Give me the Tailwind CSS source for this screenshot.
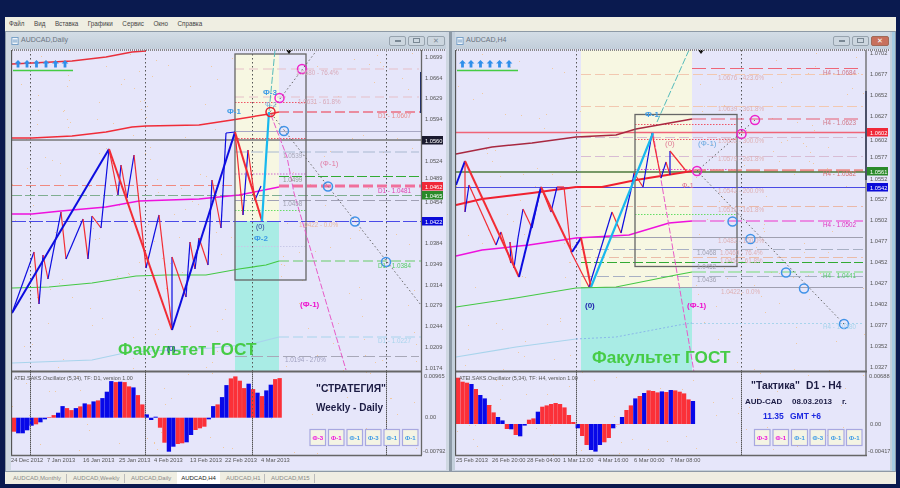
<!DOCTYPE html>
<html lang="ru">
<head>
    <meta charset="UTF-8">
    <title>AUDCAD</title>
    <script src="https://cdn.jsdelivr.net/npm/@tailwindcss/browser@4"></script>
</head>
<body class="h-[488px] w-[900px] overflow-hidden bg-[#0a1a4f] pl-[5px] pr-[4px] pt-[17px] font-['Liberation_Sans',sans-serif]">
    <div class="flex h-[467px] flex-col">
        <!-- menu -->
        <div class="flex h-[14px] items-center gap-[9.500px] bg-[#efeee2] pl-[4px] text-[6.300px] text-[#444]">
            <span>Файл</span><span>Вид</span><span>Вставка</span><span>Графики</span><span>Сервис</span><span>Окно</span><span>Справка</span>
        </div>

        <div class="flex h-[441px] gap-[2px] bg-[#8d9aa6] p-[1px]">
            <!-- daily window -->
            <div class="flex w-[444px] flex-col border-r border-[#8b98a4] bg-[#cfd8e2] pl-[5px] pr-[3px]">
                <div class="flex h-[17px] items-center justify-between bg-gradient-to-b from-[#d3dde6] to-[#c2ceda] pr-[1px]">
                    <div class="flex items-center gap-[2px] text-[7px] text-[#6a7480]">
                        <svg class="h-[10px] w-[8px]" viewBox="0 0 9 10"><rect x="1" y="1" width="7" height="8" fill="#eef4fa" stroke="#6f9ac4"/><path d="M2 4H7M2 6H7" stroke="#6f9ac4"/></svg>
                        <span>AUDCAD,Daily</span>
                    </div>
                    <div class="flex gap-[2px]">
                        <div class="flex h-[10px] w-[17px] items-center justify-center rounded-[2px] border border-[#97a3ae] bg-[#ccd6df]"><span class="h-[2px] w-[6px] border border-[#7a8894]"></span></div>
                        <div class="flex h-[10px] w-[17px] items-center justify-center rounded-[2px] border border-[#97a3ae] bg-[#ccd6df]"><span class="h-[5px] w-[7px] border border-[#7a8894]"></span></div>
                        <div class="flex h-[10px] w-[18px] items-center justify-center rounded-[2px] border border-[#97a3ae] bg-[#ccd6df] text-[7px] leading-none text-[#7a8894]">✕</div>
                    </div>
                </div>
                <svg id="daily" class="block h-[421px] w-[435px] blur-[0.3px]" viewBox="12 49 435 421" fill="none">
                    <defs><path id="up" d="M0 -4L3.4 -0.6H1.4V3.5H-1.4V-0.6H-3.4Z" fill="#2f8fea"/></defs>
                    <rect x="12" y="49" width="435" height="421" fill="#e6e6fa"/>
                    <g id="daily-specks"></g>
                    <rect x="236" y="54" width="44" height="167" fill="#f7f7e2"/>
                    <rect x="236" y="221" width="44" height="150" fill="#a9ece5"/>
                    <path d="M31.500 50V455M146.500 50V455M253.500 50V455M387.500 50V455" stroke="#555" stroke-dasharray="1.500 2.500"/>

                    <!-- levels -->
                    <g stroke-width="1">
                        <path d="M236 69H420M236 97H420" stroke="#e6bfc8" stroke-dasharray="9 5"/>
                        <path d="M236 102.500H307M236 138.500H307" stroke="#ee5566" stroke-dasharray="1.500 1.500"/>
                        <path d="M237 131.500H422" stroke="#a8a8c4"/>
                        <path d="M236 152H420" stroke="#a8b8d0" stroke-dasharray="12 4"/>
                        <path d="M236 174H307" stroke="#cc66cc" stroke-dasharray="1.500 1.500"/>
                        <path d="M280 176.500H420" stroke="#33aa33" stroke-dasharray="10 3"/>
                        <path d="M13 185.500H236" stroke="#f08a80" stroke-dasharray="10 4"/>
                        <path d="M13 195.500H422" stroke="#7fae90" stroke-dasharray="10 3"/>
                        <path d="M236 200.500H420" stroke="#a0a0b4" stroke-dasharray="12 4"/>
                        <path d="M236 210.500H307" stroke="#66dd66" stroke-dasharray="1.500 1.500"/>
                        <path d="M13 221.500H422" stroke="#4a4ae8" stroke-dasharray="14 3"/>
                        <path d="M236 246.500H307" stroke="#c8c8e8" stroke-dasharray="1.500 1.500"/>
                        <path d="M236 356.500H420" stroke="#a8a8b8" stroke-dasharray="12 4"/>
                    </g>
                    <path d="M280 112H422" stroke="#ee3344" stroke-dasharray="10 4"/>
                    <path d="M280 186H422" stroke="#f0709c" stroke-width="3" stroke-dasharray="10 4"/>
                    <path d="M280 261H422" stroke="#66cc66" stroke-dasharray="10 4"/>
                    <path d="M280 337H422" stroke="#a8d4ec" stroke-dasharray="10 4"/>

                    <path d="M13 140H422" stroke="#777" stroke-width="1.500"/>

                    <!-- moving averages -->
                    <path d="M13 64L73 61L107 57L133 52L147 51" stroke="#e8303c" stroke-width="1.500"/>
                    <path d="M13 138L33 138L73 136L107 132L133 127L147 126L200 125L233 120L270 114L280 112" stroke="#f02c38" stroke-width="1.500"/>
                    <path d="M13 214L33 214L62 211L107 207L140 201L200 199L240 195L280 187" stroke="#ee11dd" stroke-width="1.500"/>
                    <path d="M13 288L50 287L93 283L137 276L167 275L207 275L240 269L267 265L280 261" stroke="#44c844" stroke-width="1.200"/>
                    <path d="M13 363L93 360L130 352L213 348L253 344L280 337" stroke="#a8d4ec" stroke-width="1.200"/>

                    <rect x="236" y="54" width="71" height="226" stroke="#666" stroke-width="1.300"/>

                    <!-- trend lines -->
                    <path d="M276 50L270 112" stroke="#55bbbb" stroke-dasharray="7 2"/>
                    <path d="M272 115L288 157L295 193L347 370" stroke="#e85bc8" stroke-dasharray="6 2"/>
                    <path d="M318 50L271 112L356 221L422 305" stroke="#666" stroke-dasharray="1.500 2.500"/>

                    <g id="daily-thin"></g>
                    <g id="daily-thick"></g>
                    <path d="M263 221L270 112" stroke="#18b8ee" stroke-width="2.200"/>

                    <!-- fibo marks -->
                    <g stroke-width="1.500">
                        <circle cx="303" cy="69" r="4.500" stroke="#ee22cc"/>
                        <circle cx="280.500" cy="98" r="4.500" stroke="#ee22cc"/>
                        <circle cx="271.500" cy="112" r="4.500" stroke="#e82030"/>
                        <circle cx="285" cy="131" r="4.500" stroke="#3f92e8"/>
                        <circle cx="329" cy="186.500" r="4.500" stroke="#3f92e8"/>
                        <circle cx="356" cy="221.500" r="4.500" stroke="#3f92e8"/>
                        <circle cx="387" cy="262" r="4.500" stroke="#3f92e8"/>
                    </g>

                    <use href="#up" x="19" y="64"/><use href="#up" x="28" y="64"/><use href="#up" x="37.500" y="64"/><use href="#up" x="47" y="64"/><use href="#up" x="56.500" y="64"/><use href="#up" x="66" y="64"/>
                    <path d="M14 70.500H74" stroke="#44cc44" stroke-width="1.500"/>
                    <path d="M287 50H293L290 54Z" fill="#111"/>
                    <path d="M422 72V113" stroke="#1a2a6a" stroke-width="2"/>

                    <!-- fibo labels -->
                    <g font-size="6.300">
                        <text x="297" y="75" fill="#d8a8b8">1.0680 - 76.4%</text>
                        <text x="299" y="104" fill="#d8a8b8">1.0631 - 61.8%</text>
                        <text x="379" y="118" fill="#e88a8a">D1 - 1.0607</text>
                        <text x="284" y="158" fill="#a8a8b8">1.0539</text>
                        <text x="284" y="182" fill="#8f9f8f">1.0499</text>
                        <text x="379" y="193" fill="#e040b0">D1 - 1.0481</text>
                        <text x="284" y="206" fill="#a0a0b0">1.0458</text>
                        <text x="300" y="227" fill="#e8b8a0">1.0422 - 0.0%</text>
                        <text x="379" y="268" fill="#55cc66">D1 - 1.0384</text>
                        <text x="379" y="343" fill="#a8d4ec">D1 - 1.0227</text>
                        <text x="286" y="362" fill="#a0a0c0">1.0194 - 270%</text>
                    </g>
                    <g font-size="8" font-weight="700" fill="#3b9ae6">
                        <text x="264" y="95">Ф-3</text>
                        <text x="228" y="114">Ф-1</text>
                        <text x="255" y="241">Ф-2</text>
                    </g>
                    <text x="266" y="107" font-size="7" fill="#7fb0e0">Ф-2</text>
                    <text x="321" y="166" font-size="8" fill="#e080a8">(Ф-1)</text>
                    <text x="301" y="307" font-size="8" font-weight="700" fill="#ee11cc">(Ф-1)</text>
                    <text x="257" y="229" font-size="7" fill="#2a3a9a">(0)</text>
                    <text x="119" y="355" font-size="17.200" font-weight="700" fill="#46cc46">Факультет ГОСТ</text>
                    <text x="168" y="351" font-size="7" fill="#1a1aaa">(0)</text>

                    <!-- oscillator -->
                    <path d="M12 371.500H423" stroke="#666" stroke-width="1.800"/>
                    <g id="daily-bars"></g>
                    <path d="M31.500 372V455M146.500 372V455M253.500 372V455M387.500 372V455" stroke="#555" stroke-dasharray="1.500 2.500"/>
                    <path d="M12.500 50V455" stroke="#555" stroke-width="1.300"/>
                    <path d="M422.500 50V455" stroke="#666" stroke-width="1.300"/>
                    <path d="M12 455.500H423" stroke="#666" stroke-width="1.300"/>
                    <path d="M13 50H447" stroke="#888" stroke-width="2" stroke-dasharray="1 1"/>
                    <text x="15" y="380" font-size="5.400" fill="#555">ATEI.SAKS.Oscillator (5,34), TF: D1, version 1.00</text>
                    <text x="317" y="392" font-size="10.300" font-weight="700" fill="#1c1c44">"СТРАТЕГИЯ"</text>
                    <text x="317" y="411" font-size="10" font-weight="700" fill="#1c1c44">Weekly - Daily</text>

                    <!-- buttons -->
                    <g stroke="#a8a8e0" stroke-width="1.200" fill="#f4f4e4">
                        <rect x="311" y="429.500" width="15.500" height="16" /><rect x="329.500" y="429.500" width="15.500" height="16" /><rect x="348" y="429.500" width="15.500" height="16" /><rect x="366.500" y="429.500" width="15.500" height="16" /><rect x="385" y="429.500" width="15.500" height="16" /><rect x="403.500" y="429.500" width="15.500" height="16" />
                    </g>
                    <g font-size="6" font-weight="700" text-anchor="middle">
                        <text x="318.800" y="440" fill="#ee11dd">Ф-3</text><text x="337.300" y="440" fill="#ee11dd">Ф-1</text><text x="355.800" y="440" fill="#3b9ae6">Ф-1</text><text x="374.300" y="440" fill="#3b9ae6">Ф-3</text><text x="392.800" y="440" fill="#3b9ae6">Ф-1</text><text x="411.300" y="440" fill="#3b9ae6">Ф-1</text>
                    </g>

                    <!-- axis -->
                    <g font-size="5.700" fill="#555">
                        <text x="426" y="59">1.0699</text><text x="426" y="80">1.0664</text><text x="426" y="100">1.0629</text><text x="426" y="121">1.0594</text><text x="426" y="163">1.0524</text><text x="426" y="180">1.0489</text><text x="426" y="204">1.0454</text><text x="426" y="245">1.0384</text><text x="426" y="266">1.0349</text><text x="426" y="287">1.0314</text><text x="426" y="307">1.0279</text><text x="426" y="328">1.0244</text><text x="426" y="349">1.0209</text><text x="426" y="370">1.0174</text><text x="425" y="378">0.00965</text><text x="426" y="419">0.00</text><text x="424" y="453">-0.00792</text>
                        <text x="12" y="462">24 Dec 2012</text><text x="48" y="462">7 Jan 2013</text><text x="84" y="462">16 Jan 2013</text><text x="120" y="462">25 Jan 2013</text><text x="155" y="462">4 Feb 2013</text><text x="191" y="462">13 Feb 2013</text><text x="226" y="462">22 Feb 2013</text><text x="262" y="462">4 Mar 2013</text>
                    </g>
                    <rect x="423" y="136" width="21" height="8.500" fill="#1a1a2e"/><text x="426" y="142.500" font-size="5.700" fill="#fff">1.0560</text>
                    <rect x="423" y="182" width="21" height="8.500" fill="#f02838"/><text x="426" y="188.500" font-size="5.700" fill="#fff">1.0462</text>
                    <rect x="423" y="191" width="21" height="8.500" fill="#2a8a2a"/><text x="426" y="197.500" font-size="5.700" fill="#fff">1.0465</text>
                    <rect x="423" y="217" width="21" height="8.500" fill="#0a0ad8"/><text x="426" y="223.500" font-size="5.700" fill="#fff">1.0422</text>
                </svg>
            </div>

            <!-- H4 window -->
            <div class="flex w-[443px] flex-col border-r-[3px] border-[#a4cbe2] bg-[#c4d0dc] pl-[3px] pr-[2px]">
                <div class="flex h-[17px] items-center justify-between bg-gradient-to-b from-[#d3dde6] to-[#c2ceda] pr-[1px]">
                    <div class="flex items-center gap-[2px] pl-[1px] text-[7px] text-[#6a7480]">
                        <svg class="h-[10px] w-[8px]" viewBox="0 0 9 10"><rect x="1" y="1" width="7" height="8" fill="#eef4fa" stroke="#6f9ac4"/><path d="M2 4H7M2 6H7" stroke="#6f9ac4"/></svg>
                        <span>AUDCAD,H4</span>
                    </div>
                    <div class="flex gap-[2px]">
                        <div class="flex h-[10px] w-[17px] items-center justify-center rounded-[2px] border border-[#97a3ae] bg-[#ccd6df]"><span class="h-[2px] w-[6px] border border-[#7a8894]"></span></div>
                        <div class="flex h-[10px] w-[17px] items-center justify-center rounded-[2px] border border-[#97a3ae] bg-[#ccd6df]"><span class="h-[5px] w-[7px] border border-[#7a8894]"></span></div>
                        <div class="flex h-[10px] w-[18px] items-center justify-center rounded-[2px] border border-[#a06a58] bg-[#c8705c] text-[7px] leading-none text-white">✕</div>
                    </div>
                </div>
                <svg id="h4" class="block h-[421px] w-[435px] blur-[0.3px]" viewBox="456 49 435 421" fill="none">
                    <rect x="456" y="49" width="435" height="421" fill="#e6e6fa"/>
                    <g id="h4-specks"></g>
                    <rect x="582" y="50" width="111" height="237" fill="#f7f7e2"/>
                    <rect x="582" y="287" width="111" height="85" fill="#a9ece5"/>
                    <path d="M577.500 50V455M742.500 50V455" stroke="#555" stroke-dasharray="1.500 2.500"/>

                    <!-- levels -->
                    <g stroke-width="1">
                        <path d="M693 68.500H864" stroke="#ee6678" stroke-dasharray="14 5"/>
                        <path d="M582 74.500H864M582 106.500H864" stroke="#f2c8b0" stroke-dasharray="10 4"/>
                        <path d="M636 124.500H738M636 139.500H738" stroke="#ee5566" stroke-dasharray="1.500 1.500"/>
                        <path d="M582 137.500H864M582 156.500H864" stroke="#d8bcd4" stroke-dasharray="10 4"/>
                        <path d="M636 169.500H738" stroke="#e050c8" stroke-dasharray="1.500 1.500"/>
                        <path d="M582 206.500H864" stroke="#eab8a8" stroke-dasharray="10 4"/>
                        <path d="M636 214.500H738" stroke="#66dd66" stroke-dasharray="1.500 1.500"/>
                        <path d="M582 237.500H864M582 287.500H864" stroke="#a0a0b0"/>
                        <path d="M582 249.500H864M582 276.500H864" stroke="#a8b0c4" stroke-dasharray="12 4"/>
                        <path d="M582 257.500H864" stroke="#eabca8" stroke-dasharray="10 4"/>
                        <path d="M582 262.500H864" stroke="#33aa33" stroke-dasharray="10 3"/>
                    </g>
                    <path d="M693 119H864" stroke="#e85c70" stroke-dasharray="14 5"/>
                    <path d="M693 170.500H864" stroke="#ea8c88" stroke-width="2.500" stroke-dasharray="14 4"/>
                    <path d="M693 221H864" stroke="#ee33cc" stroke-dasharray="14 4"/>
                    <path d="M693 272H864" stroke="#77dd77" stroke-dasharray="14 4"/>
                    <path d="M693 323.500H864" stroke="#a8d4ec" stroke-dasharray="2 2"/>

                    <path d="M457 132.500H867" stroke="#f06478" stroke-width="1.300"/>
                    <path d="M457 172H867" stroke="#4c7a3c" stroke-width="1.500"/>
                    <path d="M457 187.500H867" stroke="#4a4ae4"/>

                    <!-- moving averages -->
                    <path d="M457 154L493 147L533 143L577 137L617 135L637 129L693 119" stroke="#a82840" stroke-width="1.500"/>
                    <path d="M457 205L483 199L533 193L577 187L603 187L637 180L693 171" stroke="#f02030" stroke-width="1.800"/>
                    <path d="M457 256L483 250L530 245L577 238L630 235L670 223L693 221" stroke="#ee11dd" stroke-width="1.500"/>
                    <path d="M457 307L517 298L577 288L617 287L677 275L693 272" stroke="#44c844" stroke-width="1.200"/>
                    <path d="M457 357L517 347L577 339" stroke="#a8d4ec" stroke-width="1.200"/>
                    <path d="M577 339L617 337L680 325L693 323" stroke="#8ab8ea" stroke-dasharray="2 2"/>

                    <rect x="636" y="114.500" width="102" height="152" stroke="#666" stroke-width="1.300"/>

                    <!-- trend lines -->
                    <path d="M658 122L690 50" stroke="#55bbbb" stroke-dasharray="7 2"/>
                    <path d="M654 133L695 372" stroke="#e85bc8" stroke-dasharray="6 2"/>
                    <path d="M756 120L698 171L845 324" stroke="#666" stroke-dasharray="1.500 2.500"/>

                    <g id="h4-thin"></g>
                    <g id="h4-thick"></g>
                    <path d="M592 287L654 133" stroke="#18b8ee" stroke-width="2.200"/>

                    <!-- fibo marks -->
                    <g stroke-width="1.500">
                        <circle cx="756" cy="120" r="4.500" stroke="#ee22cc"/>
                        <circle cx="742.500" cy="134" r="4.500" stroke="#ee22cc"/>
                        <circle cx="698" cy="171" r="4.500" stroke="#ee22cc"/>
                        <circle cx="733.500" cy="221.500" r="4.500" stroke="#3f92e8"/>
                        <circle cx="751.500" cy="239" r="4.500" stroke="#3f92e8"/>
                        <circle cx="787" cy="272.500" r="4.500" stroke="#3f92e8"/>
                        <circle cx="805" cy="288.500" r="4.500" stroke="#3f92e8"/>
                        <circle cx="845" cy="324" r="4.500" stroke="#3f92e8"/>
                    </g>

                    <use href="#up" x="463.500" y="64"/><use href="#up" x="472" y="64"/><use href="#up" x="481.500" y="64"/><use href="#up" x="491" y="64"/><use href="#up" x="500.500" y="64"/><use href="#up" x="510" y="64"/>
                    <path d="M458 70.500H519" stroke="#44cc44" stroke-width="1.500"/>
                    <path d="M699 50H705L702 54Z" fill="#111"/>
                    <path d="M867 91V180" stroke="#1a2a6a" stroke-width="2"/>

                    <!-- fibo labels -->
                    <g font-size="6.300" fill="#deb0b4">
                        <text x="719" y="80">1.0676 - 423.6%</text>
                        <text x="719" y="111">1.0639 - 361.8%</text>
                        <text x="719" y="143">1.0602 - 300.0%</text>
                        <text x="719" y="161">1.0579 - 261.8%</text>
                        <text x="719" y="193">1.0542 - 200.0%</text>
                        <text x="719" y="212">1.0519 - 161.8%</text>
                        <text x="719" y="243">1.0482 - 100.0%</text>
                        <text x="721" y="255">1.0460 - 76.4%</text>
                        <text x="721" y="263">1.0451 - 61.8%</text>
                        <text x="722" y="294">1.0422 - 0.0%</text>
                    </g>
                    <g font-size="6.300" fill="#a0a0b0">
                        <text x="698" y="255">1.0468</text>
                        <text x="698" y="269">1.0452</text>
                        <text x="698" y="282">1.0436</text>
                    </g>
                    <g font-size="6.300">
                        <text x="824" y="75" fill="#d07888">H4 - 1.0684</text>
                        <text x="824" y="125" fill="#d07888">H4 - 1.0623</text>
                        <text x="824" y="176" fill="#d87070">H4 - 1.0582</text>
                        <text x="824" y="227" fill="#e030c0">H4 - 1.0502</text>
                        <text x="824" y="278" fill="#55cc66">H4 - 1.0441</text>
                        <text x="824" y="329" fill="#a8d4ec">H4 - 1.0380</text>
                    </g>
                    <text x="646" y="117" font-size="8" font-weight="700" fill="#3b9ae6">Ф-1</text>
                    <text x="666" y="146" font-size="8" fill="#e08098">(0)</text>
                    <text x="699" y="146" font-size="8" fill="#6aa8e0">(Ф-1)</text>
                    <text x="683" y="188" font-size="7" fill="#e07090">Ф-1</text>
                    <text x="586" y="308" font-size="8" font-weight="700" fill="#1a1aaa">(0)</text>
                    <text x="688" y="308" font-size="8" font-weight="700" fill="#ee11cc">(Ф-1)</text>
                    <text x="593" y="363" font-size="17.200" font-weight="700" fill="#46cc46">Факультет ГОСТ</text>

                    <!-- oscillator -->
                    <path d="M456 371.500H868" stroke="#666" stroke-width="1.800"/>
                    <g id="h4-bars"></g>
                    <path d="M577.500 372V455M742.500 372V455" stroke="#555" stroke-dasharray="1.500 2.500"/>
                    <path d="M456.500 50V455" stroke="#555" stroke-width="1.300"/>
                    <path d="M867 50V455" stroke="#666" stroke-width="1.300"/>
                    <path d="M456 455.500H868" stroke="#666" stroke-width="1.300"/>
                    <path d="M457 50H891" stroke="#888" stroke-width="2" stroke-dasharray="1 1"/>
                    <text x="460" y="380" font-size="5.400" fill="#555">ATEI.SAKS.Oscillator (5,34), TF: H4, version 1.00</text>
                    <text x="752" y="389" font-size="10.300" font-weight="700" fill="#1c1c44">"Тактика"</text>
                    <text x="807" y="389" font-size="10.300" font-weight="700" fill="#1c1c44">D1 - H4</text>
                    <text x="746" y="404" font-size="8" font-weight="700" fill="#1c1c44">AUD-CAD</text>
                    <text x="793" y="404" font-size="8" font-weight="700" fill="#1c1c44">08.03.2013</text>
                    <text x="843" y="404" font-size="8" font-weight="700" fill="#1c1c44">г.</text>
                    <text x="764" y="419" font-size="8.500" font-weight="700" fill="#1c28e0">11.35</text>
                    <text x="791" y="419" font-size="8.500" font-weight="700" fill="#1c28e0">GMT +6</text>

                    <!-- buttons -->
                    <g stroke="#a8a8e0" stroke-width="1.200" fill="#f4f4e4">
                        <rect x="755.500" y="429.500" width="15.500" height="16" /><rect x="774" y="429.500" width="15.500" height="16" /><rect x="792.500" y="429.500" width="16" height="16" /><rect x="811" y="429.500" width="15.500" height="16" /><rect x="829" y="429.500" width="16" height="16" /><rect x="847.500" y="429.500" width="15.500" height="16" />
                    </g>
                    <g font-size="6" font-weight="700" text-anchor="middle">
                        <text x="763.300" y="440" fill="#ee11dd">Ф-3</text><text x="781.800" y="440" fill="#ee11dd">Ф-1</text><text x="800.500" y="440" fill="#3b9ae6">Ф-1</text><text x="818.800" y="440" fill="#3b9ae6">Ф-3</text><text x="837" y="440" fill="#3b9ae6">Ф-1</text><text x="855.300" y="440" fill="#3b9ae6">Ф-1</text>
                    </g>

                    <!-- axis -->
                    <g font-size="5.700" fill="#555">
                        <text x="871" y="55">1.0702</text><text x="871" y="76">1.0677</text><text x="871" y="97">1.0652</text><text x="871" y="118">1.0627</text><text x="871" y="142">1.0602</text><text x="871" y="159">1.0577</text><text x="871" y="180.500">1.0552</text><text x="871" y="201">1.0527</text><text x="871" y="222">1.0502</text><text x="871" y="243">1.0477</text><text x="871" y="264">1.0452</text><text x="871" y="285">1.0427</text><text x="871" y="306">1.0402</text><text x="871" y="327">1.0377</text><text x="871" y="348">1.0352</text><text x="871" y="369">1.0327</text><text x="870" y="378">0.00688</text><text x="871" y="426">0.00</text><text x="869" y="453">-0.00417</text>
                        <text x="457" y="462">25 Feb 2013</text><text x="493" y="462">26 Feb 20:00</text><text x="528" y="462">28 Feb 04:00</text><text x="564" y="462">1 Mar 12:00</text><text x="599" y="462">4 Mar 16:00</text><text x="635" y="462">6 Mar 00:00</text><text x="671" y="462">7 Mar 08:00</text>
                    </g>
                    <rect x="868" y="128" width="21" height="8.500" fill="#f02838"/><text x="871" y="134.500" font-size="5.700" fill="#fff">1.0602</text>
                    <rect x="868" y="167" width="21" height="8.500" fill="#2a8a2a"/><text x="871" y="173.500" font-size="5.700" fill="#fff">1.0561</text>
                    <rect x="868" y="183" width="21" height="8.500" fill="#0a0ad8"/><text x="871" y="189.500" font-size="5.700" fill="#fff">1.0542</text>
                </svg>
            </div>
        </div>

        <!-- chart tabs -->
        <div class="flex h-[12px] items-center whitespace-nowrap bg-[#efeee2] text-[6px] text-[#888]">
            <span class="w-[62px] border-r border-[#bbb] pl-[8px]">AUDCAD,Monthly</span>
            <span class="w-[58px] border-r border-[#bbb] pl-[6px]">AUDCAD,Weekly</span>
            <span class="w-[52px] pl-[6px]">AUDCAD,Daily</span>
            <span class="w-[43px] bg-white text-center font-medium leading-[12px] text-[#222]">AUDCAD,H4</span>
            <span class="w-[45px] border-r border-[#bbb] pl-[6px]">AUDCAD,H1</span>
            <span class="w-[50px] border-r border-[#bbb] pl-[6px]">AUDCAD,M15</span>
        </div>
    </div>

    <script>
        const NS = 'http://www.w3.org/2000/svg';

        function add(parent, tag, attrs) {
            const el = document.createElementNS(NS, tag);
            for (const k in attrs) el.setAttribute(k, attrs[k]);
            parent.appendChild(el);
        }

        // rising legs blue, falling legs red
        function zigzag(id, pts, width) {
            const g = document.getElementById(id);
            for (let i = 1; i < pts.length; i++) {
                const [x1, y1] = pts[i - 1], [x2, y2] = pts[i];
                add(g, 'line', { x1, y1, x2, y2, 'stroke-width': width, stroke: y2 < y1 ? '#0c0ce0' : '#f22c34' });
            }
        }

        function bars(id, x0, base, colors, values) {
            const g = document.getElementById(id);
            values.forEach((v, i) => {
                add(g, 'rect', {
                    x: x0 + i * 4.43, width: 4.3,
                    y: v > 0 ? base - v : base, height: Math.abs(v),
                    fill: colors[i] === 'B' ? '#0808e8' : '#fb3038'
                });
            });
        }

        // faint chart noise
        function specks(id, x, w, seed) {
            const g = document.getElementById(id);
            for (let i = 0; i < 260; i++) {
                seed = (seed * 16807) % 2147483647;
                const px = x + seed % w;
                seed = (seed * 16807) % 2147483647;
                add(g, 'rect', { x: px, y: 50 + seed % 405, width: 1, height: 1, fill: '#f0c8a0' });
            }
        }

        specks('daily-specks', 13, 409, 12345);
        specks('h4-specks', 457, 410, 67891);

        zigzag('daily-thin', [[13,313],[35,252],[40,304],[44,255],[49,279],[62,212],[67,259],[84,219],[89,259],[93,216],[102,228],[110,149],[119,195],[122,165],[128,198],[135,155],[147,268],[160,215],[173,328],[173,257],[187,297],[191,242],[196,269],[200,238],[209,265],[213,180],[222,228],[227,133],[236,132],[244,215],[249,150],[256,200],[262,186]], 1.2);
        zigzag('daily-thick', [[13,313],[110,149],[173,330],[236,132],[263,221]], 2);
        zigzag('h4-thin', [[466,161],[466,212],[470,185],[497,245],[502,232],[512,263],[511,242],[515,268],[519,238],[524,209],[533,228],[542,187],[552,212],[558,187],[565,187],[572,252],[590,287],[613,212],[622,233],[632,190],[635,173],[644,187],[653,133],[662,178],[667,162],[671,175],[671,151],[688,172]], 1.2);
        zigzag('h4-thick', [[457,185],[466,161],[520,277],[542,187],[573,252],[582,238],[592,287]], 2);

        bars('daily-bars', 12.7, 417.7, 'RBBBBRBBRRBBRRBRBRBRBBBRBRRBRRBBBRRBBRRBBRRRBBRBBRRRRBRBRBBRR',
            [-14,-15.6,-15.6,-12.6,-8,-6.6,-4.6,-1.6,.6,2.6,5,11.6,9.6,7.6,9.6,11.3,14.3,13.3,16.3,17.3,19.6,26,36.6,35.6,36,35.6,31.3,30.3,22.6,13.3,3.3,-2.3,1,-10,-25,-34,-29,-26.3,-25.6,-24.6,-17.3,-12.3,-10.6,-9,-1.6,11.6,13.3,20.6,32.6,39.3,41.3,37,29.6,34,28.6,25,21.6,27.3,33,38.6,39.6]);
        bars('h4-bars', 457, 424, 'RRRBRBBRRBBRBRBBRRBRRRRRRRRBRRBBBRRBRBRRBRBRRRBRBRRRRB',
            [46.3,42.3,41.3,40,35,29,25.6,19,11.6,7,3.6,-5,-5.3,-11,-12.3,-1.6,4.3,5.6,12.3,17.3,18.6,20,21,20,16.6,9,2,-4.3,-12,-21,-26,-27.6,-21,-18.3,-14,-4.3,-.3,7,14,18.6,25.6,28,31,33.6,33,31.6,32.6,32,34,33.6,32.3,30.6,24.6,23]);
    </script>
</body>
</html>
